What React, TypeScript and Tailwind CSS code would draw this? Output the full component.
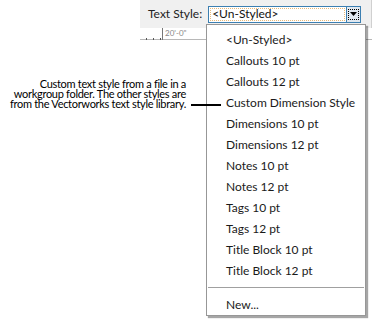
const items = [
  "<Un-Styled>",
  "Callouts 10 pt",
  "Callouts 12 pt",
  "Custom Dimension Style",
  "Dimensions 10 pt",
  "Dimensions 12 pt",
  "Notes 10 pt",
  "Notes 12 pt",
  "Tags 10 pt",
  "Tags 12 pt",
  "Title Block 10 pt",
  "Title Block 12 pt",
];

function Ruler() {
  return (
    <div className="relative ml-[140px] h-[14px] bg-white">
      <div className="absolute bottom-[2px] left-0 right-0 h-px bg-[#b8b8b8]" />
      <div className="absolute bottom-[2px] left-[6px] h-[2px] w-px bg-[#555]" />
      <div className="absolute bottom-[2px] left-[13px] h-[2px] w-px bg-[#555]" />
      <div className="absolute bottom-[2px] left-[20px] h-[2px] w-px bg-[#555]" />
      <div className="absolute bottom-[2px] left-[22px] h-[12px] w-px bg-[#777]" />
      <span className="absolute left-[25px] top-[1px] whitespace-nowrap text-[8px] leading-[9px] text-[#888]">20'-0"</span>
    </div>
  );
}

function ComboBox() {
  return (
    <div className="flex h-[17px] w-[155px] items-stretch border border-[#3c7fb1] bg-white">
      <div className="m-px flex flex-1 items-center border border-dotted border-[#e8b878] px-px text-[12px] leading-none text-[#111]">
        &lt;Un-Styled&gt;
      </div>
      <div className="flex w-[14px] items-center justify-center border-l border-[#3c7fb1] bg-[#e0e8f0]">
        <div className="flex h-[11px] w-[11px] items-center justify-center border border-dotted border-black">
          <svg width="7" height="4" viewBox="0 0 7 4">
            <path d="M0 0h7L3.5 4z" fill="#000" />
          </svg>
        </div>
      </div>
    </div>
  );
}

export default function App() {
  return (
    <div
      className="relative h-[324px] w-[372px] overflow-hidden bg-white text-[#1a1a1a]"
      style={{ fontFamily: 'Lato, "Noto Sans", sans-serif' }}
    >
      <div className="ml-[140px] flex h-[28px] items-center gap-[6px] bg-[#f0f0f0] pl-[8px]">
        <span className="whitespace-nowrap text-[12px] text-[#222]">Text Style:</span>
        <ComboBox />
        <div className="ml-[4px] h-full w-px bg-[#d0d0d0]" />
      </div>
      <Ruler />

      <div className="relative z-10 mt-[37px] flex items-end">
        <p className="w-[186px] whitespace-nowrap text-right text-[11px] leading-[10px] tracking-[-0.3px] text-black">
          Custom text style from a file in a
          <br />
          workgroup folder. The other styles are
          <br />
          from the Vectorworks text style library.
        </p>
        <div className="mb-[3px] ml-[5px] h-[2px] w-[30px] bg-black" />
      </div>

      <div className="absolute left-[206px] top-[24px] flex h-[292px] w-[160px] flex-col border border-[#979797] bg-white pt-[5px] shadow-[2px_2px_1px_rgba(0,0,0,0.35)]">
        {items.map((item) => (
          <div key={item} className="flex h-[21px] items-center whitespace-nowrap pl-[19px] text-[12px] text-[#1a1a1a]">
            {item}
          </div>
        ))}
        <div className="mx-px mb-[6px] mt-[6px] h-px bg-[#a0a0a0]" />
        <div className="flex h-[21px] items-center pl-[19px] text-[12px] text-[#1a1a1a]">New...</div>
      </div>
    </div>
  );
}
